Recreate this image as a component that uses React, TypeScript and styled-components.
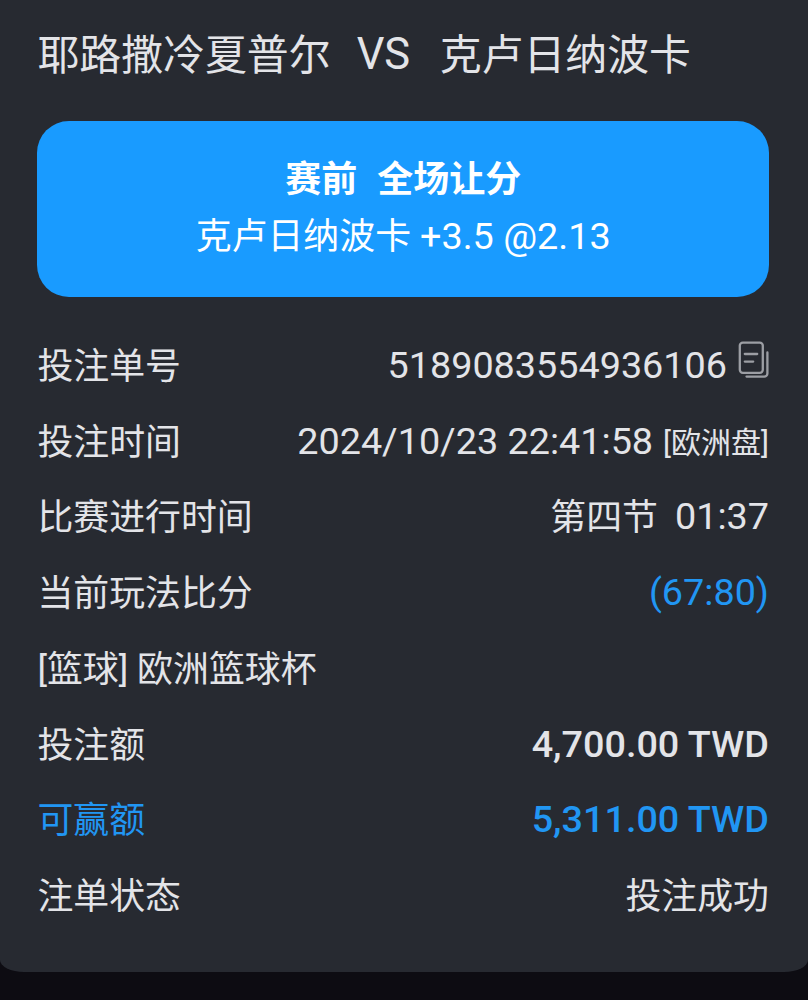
import styled, { createGlobalStyle } from 'styled-components';

const GlobalStyle = createGlobalStyle`
  body {
    margin: 0;
    background: #0d0c12;
    font-family: Roboto, 'Noto Sans CJK SC', sans-serif;
    color: #e3e4e8;
  }
`;

const Page = styled.main`
  height: 1000px;
  overflow: hidden;
  background: #0d0c12;
`;

const Panel = styled.section`
  box-sizing: border-box;
  height: 972px;
  padding: 24px 39px 0 37.4px;
  background: #272a31;
  border-radius: 0 0 24px 24px / 0 0 12px 12px;
`;

const MatchTitle = styled.h1`
  display: flex;
  align-items: center;
  height: 60px;
  margin: 0 0 36.6px;
  font-size: 41.9px;
  font-weight: 400;
  white-space: nowrap;
`;

const TeamName = styled.span`
  padding-bottom: 6px;
`;

const Versus = styled.span`
  margin: 0 29.5px 0 26px;
  padding-top: 1px;
  font-size: 43.5px;
`;

const BetCard = styled.div`
  box-sizing: border-box;
  height: 176.4px;
  padding: 31px 0 0;
  border-radius: 32px;
  background: #199bff;
  color: #fff;
  text-align: center;
`;

const BetMarket = styled.div`
  display: flex;
  justify-content: center;
  gap: 20px;
  font-size: 36px;
  line-height: 57px;
  font-weight: 700;
`;

const BetPick = styled.div`
  display: flex;
  justify-content: center;
  gap: 9px;
  font-size: 35.9px;
  line-height: 56px;
  white-space: nowrap;
`;

const Details = styled.dl`
  margin: 30px 0 0;
`;

const Row = styled.div<{ $accent?: boolean }>`
  display: flex;
  align-items: center;
  justify-content: space-between;
  height: 75.75px;
  color: ${({ $accent }) => ($accent ? '#2196f3' : 'inherit')};
`;

const Label = styled.dt`
  padding-top: 4px;
  font-size: 35.9px;
  line-height: 52px;
  white-space: nowrap;
`;

const Value = styled.dd<{ $accent?: boolean; $strong?: boolean }>`
  display: flex;
  align-items: center;
  margin: 0;
  font-size: 35.9px;
  line-height: 52px;
  font-weight: ${({ $strong }) => ($strong ? 500 : 400)};
  color: ${({ $accent }) => ($accent ? '#2196f3' : 'inherit')};
  white-space: nowrap;
`;

// Latin digits run slightly larger than the Chinese text beside them
const Digits = styled.span`
  font-size: 37.75px;
`;

const PickDigits = styled(Digits)`
  line-height: 55px;
`;

const Odds = styled.span`
  margin-left: 10px;
  padding-top: 4px;
  font-size: 30px;
`;

const Period = styled.span`
  margin-right: 17px;
  padding-top: 3px;
`;

const Status = styled.span`
  padding-top: 4px;
`;

const CopyButton = styled.button`
  display: flex;
  margin: -10px 0 0 11px;
  padding: 0;
  border: 0;
  background: none;
  color: #9c9ea4;
  cursor: pointer;
`;

function CopyIcon() {
  return (
    <svg width='31' height='38' viewBox='0 0 31 38' fill='none' stroke='currentColor' strokeWidth='2.3' strokeLinecap='round'>
      <rect x='1.8' y='1.6' width='23' height='30.2' rx='3' />
      <path d='M6.8 13h12.4M6.8 20.6h8.4' />
      <path d='M29.4 11.4v21a3.2 3.2 0 0 1-3.2 3.2H8.5' />
    </svg>
  );
}

export default function App() {
  return (
    <Page>
      <GlobalStyle />
      <Panel>
        <MatchTitle>
          <TeamName>耶路撒冷夏普尔</TeamName>
          <Versus>VS</Versus>
          <TeamName>克卢日纳波卡</TeamName>
        </MatchTitle>
        <BetCard>
          <BetMarket>
            <span>赛前</span>
            <span>全场让分</span>
          </BetMarket>
          <BetPick>
            <span>克卢日纳波卡</span>
            <PickDigits>+3.5 @2.13</PickDigits>
          </BetPick>
        </BetCard>
        <Details>
          <Row>
            <Label>投注单号</Label>
            <Value>
              <Digits>5189083554936106</Digits>
              <CopyButton type='button' aria-label='复制'>
                <CopyIcon />
              </CopyButton>
            </Value>
          </Row>
          <Row>
            <Label>投注时间</Label>
            <Value>
              <Digits>2024/10/23 22:41:58</Digits>
              <Odds>[欧洲盘]</Odds>
            </Value>
          </Row>
          <Row>
            <Label>比赛进行时间</Label>
            <Value>
              <Period>第四节</Period>
              <Digits>01:37</Digits>
            </Value>
          </Row>
          <Row>
            <Label>当前玩法比分</Label>
            <Value $accent>
              <Digits>(67:80)</Digits>
            </Value>
          </Row>
          <Row>
            <Label>[篮球] 欧洲篮球杯</Label>
          </Row>
          <Row>
            <Label>投注额</Label>
            <Value $strong>
              <Digits>4,700.00 TWD</Digits>
            </Value>
          </Row>
          <Row $accent>
            <Label>可赢额</Label>
            <Value $strong>
              <Digits>5,311.00 TWD</Digits>
            </Value>
          </Row>
          <Row>
            <Label>注单状态</Label>
            <Value>
              <Status>投注成功</Status>
            </Value>
          </Row>
        </Details>
      </Panel>
    </Page>
  );
}
